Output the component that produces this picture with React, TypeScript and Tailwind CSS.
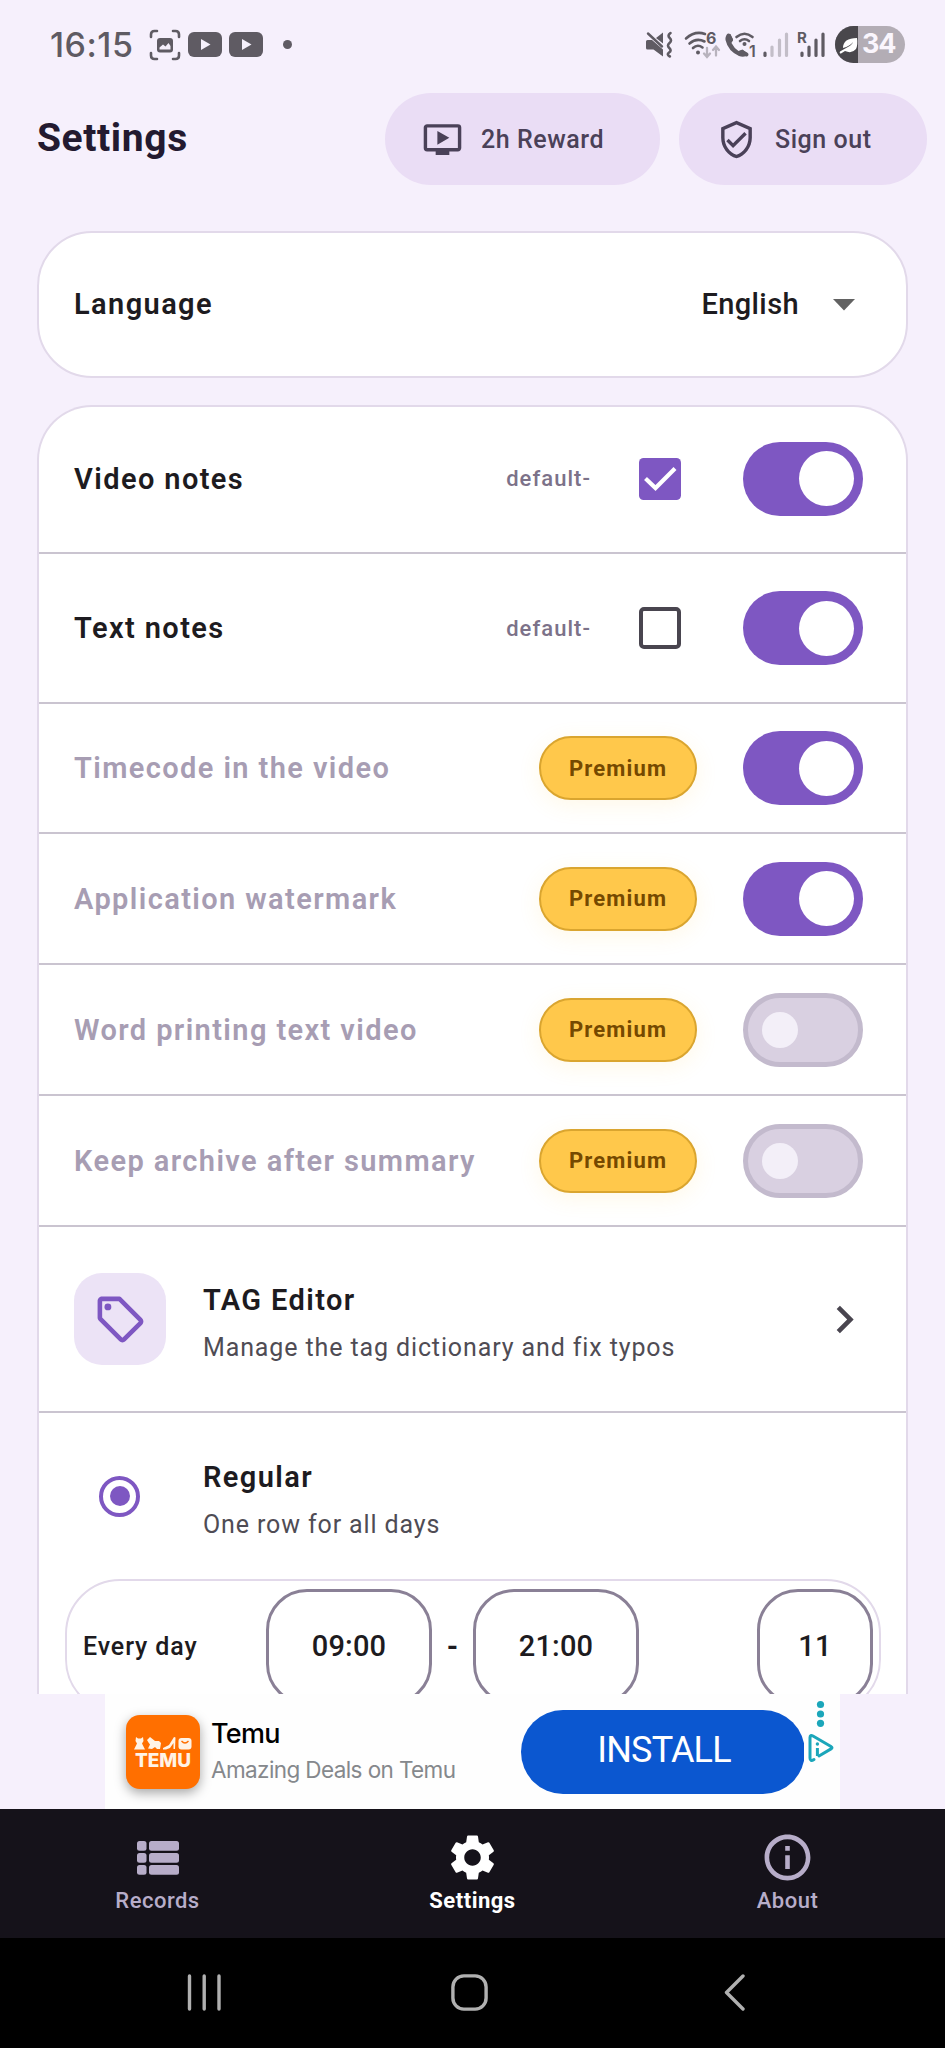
import { ReactNode, useState } from 'react'
import { MdChevronRight, MdOndemandVideo, MdOutlineInfo, MdOutlineSell, MdOutlineVerifiedUser, MdSettings } from 'react-icons/md'

type PremiumItem = {
  name: string;
  enabled: boolean;
  height: string;
}

const premiumItems: PremiumItem[] = [
  { name: 'Timecode in the video', enabled: true, height: 'h-[130px]' },
  { name: 'Application watermark', enabled: true, height: 'h-[131px]' },
  { name: 'Word printing text video', enabled: false, height: 'h-[131px]' },
  { name: 'Keep archive after summary', enabled: false, height: 'h-[131px]' },
]

export default function App() {
  return (
    <div className="w-[945px] h-[2048px] flex flex-col overflow-hidden bg-[#f6f0fc] font-['Roboto',sans-serif]">
      <StatusBar />
      <Header />

      <main className="h-[1463px] shrink-0 overflow-hidden px-[37px]">
        <section className="h-[147px] w-[871px] flex items-center justify-between rounded-[55px] border-2 border-[#e2d9ea] bg-white pl-[35px] pr-[51px]">
          <span className="text-[29px] font-semibold tracking-[1.4px] text-[#1d1b20]">Language</span>
          <div className="flex items-center gap-[34px]">
            <span className="text-[29px] font-medium tracking-[0.4px] text-[#1d1b20]">English</span>
            <svg width="22" height="12" viewBox="0 0 22 12"><path d="M0 0h22L11 11.5z" fill="#626262" /></svg>
          </div>
        </section>

        <section className="mt-[27px] w-[871px] rounded-t-[55px] border-2 border-b-0 border-[#e2d9ea] bg-white">
          <NoteRow name="Video notes" height="h-[147px] pb-[2px]" defaultChecked />
          <NoteRow name="Text notes" height="h-[150px]" />
          {premiumItems.map((item) => <PremiumRow key={item.name} item={item} />)}

          {/* Tag editor */}
          <div className="h-[186px] flex items-center border-b-2 border-[#cac4d0] pl-[35px] pr-[34px]">
            <div className="w-[92px] h-[92px] flex items-center justify-center rounded-[28px] bg-[#ece3f6]">
              <MdOutlineSell size={55} className="text-[#7e57c2]" />
            </div>
            <TitleBlock title="TAG Editor" subtitle="Manage the tag dictionary and fix typos" />
            <MdChevronRight size={55} className="ml-auto text-[#49454f]" />
          </div>

          {/* Schedule */}
          <div className="h-[166px] flex items-center pl-[60px]">
            <div className="w-[41px] h-[41px] flex items-center justify-center rounded-full border-[4px] border-[#7e57c2]">
              <div className="w-5 h-5 rounded-full bg-[#7e57c2]" />
            </div>
            <div className="w-[26px]" />
            <TitleBlock title="Regular" subtitle="One row for all days" />
          </div>
          <div className="ml-[26px] w-[816px] h-[135px] flex items-center rounded-[55px] border-2 border-[#e2d9ea] pl-[16px]">
            <span className="w-[183px] text-[25px] font-medium tracking-[0.9px] text-[#1d1b20]">Every day</span>
            <TimeBox className="w-[166px]">09:00</TimeBox>
            <span className="w-[41px] text-center text-[29px] font-bold text-[#1d1b20]">-</span>
            <TimeBox className="w-[166px]">21:00</TimeBox>
            <TimeBox className="ml-auto mr-[6px] w-[116px]">11</TimeBox>
          </div>
        </section>
      </main>

      <AdBanner />

      {/* Bottom tabs */}
      <nav className="h-[129px] shrink-0 flex bg-[#15121a] text-[#b7adc9]">
        <Tab label="Records">
          <svg width="42" height="34" viewBox="0 0 42 34" fill="currentColor">
            {[0, 12, 24].map((y) => (
              <g key={y}>
                <rect x="0" y={y} width="9.5" height="9.8" rx="2.5" />
                <rect x="12" y={y} width="30" height="9.8" rx="2.5" />
              </g>
            ))}
          </svg>
        </Tab>
        <Tab label="Settings" active>
          <MdSettings size={55} />
        </Tab>
        <Tab label="About">
          <MdOutlineInfo size={55} />
        </Tab>
      </nav>

      {/* System navigation */}
      <div className="h-[110px] shrink-0 flex items-center justify-between bg-black pl-[187px] pr-[200px] pb-px">
        <svg width="35" height="37" viewBox="0 0 35 37" stroke="#b0b0b0" strokeWidth="3.4" strokeLinecap="round">
          <path d="M2.5 2v33M17.2 2v33M32 2v33" />
        </svg>
        <svg className="mr-2" width="37" height="37" viewBox="0 0 37 37" fill="none" stroke="#b0b0b0" strokeWidth="3.4">
          <rect x="1.9" y="1.9" width="33.2" height="33.2" rx="11" />
        </svg>
        <svg width="21" height="37" viewBox="0 0 21 37" fill="none" stroke="#b0b0b0" strokeWidth="3.4" strokeLinecap="round" strokeLinejoin="round">
          <path d="M19 2L2.5 18.5L19 35" />
        </svg>
      </div>
    </div>
  )
}

function StatusBar() {
  return (
    <div className="h-[93px] shrink-0 flex items-start px-[50px] pt-[26px] text-[#5f5b63]">
      <div className="h-[37px] flex items-center">
        <span className="w-[99px] font-['Inter',sans-serif] text-[34px] font-medium tracking-[0.5px]">16:15</span>
        <svg width="32" height="32" viewBox="0 0 32 32" fill="none" stroke="currentColor" strokeWidth="2.6" strokeLinecap="round">
          <path d="M2 8V5.500Q2 2 5.500 2H8M24 2h2.500Q30 2 30 5.500V8M30 24v2.500Q30 30 26.500 30H24M8 30H5.500Q2 30 2 26.500V24" />
          <rect x="8" y="9" width="16" height="14.500" rx="3" fill="currentColor" stroke="none" />
          <path d="M10.500 20.500v-2l3.500-3 2.500 2 3-3.500 2 3v3.500z" fill="#f6f0fc" stroke="none" />
        </svg>
        <YoutubeBadge className="ml-[7px]" />
        <YoutubeBadge className="ml-[7px]" />
        <div className="ml-5 w-[9px] h-[9px] rounded-full bg-[#5f5b63]" />
      </div>

      <div className="ml-auto h-[37px] flex items-center -mr-[10px]">
        {/* Vibrate / muted */}
        <svg width="28" height="28" viewBox="0 0 28 28" fill="none" stroke="currentColor" strokeLinecap="round">
          <path d="M1 10.500Q1 9 2.500 9H7L18 18.500V25.500L8.500 18.500H2.500Q1 18.500 1 17zM18 1.500V12.500L11 7z" fill="currentColor" stroke="none" />
          <path d="M3 2.500L17 15.500" strokeWidth="2.4" />
          <path d="M25.500 2q-3.500 2.500-.8 5t-.2 5t-.2 5t-.2 4.500t.8 4" strokeWidth="2.600" />
        </svg>
        {/* Wifi 6 */}
        <svg className="ml-[11px]" width="37" height="40" viewBox="0 -6 37 40" fill="none" stroke="currentColor" strokeWidth="2.600" strokeLinecap="round">
          <path d="M2 7.500Q11 -.5 21 3M5.500 12.500Q12.500 6.500 20.500 10.500M9 17Q13.500 12.800 18.500 16.500" />
          <circle cx="14" cy="21.500" r="2" fill="currentColor" stroke="none" />
          <text x="22" y="13" fontSize="16" fontWeight="700" fontFamily="Inter" fill="currentColor" stroke="none">6</text>
          <path d="M23 17v8.500M20 22.500l3 3.500 3-3.500M32 24.500V16M29 19l3-3.500 3 3.500" stroke="#b8b3bd" strokeWidth="2.300" />
        </svg>
        {/* Wifi calling */}
        <svg className="ml-[3px]" width="37" height="40" viewBox="0 -6 37 40" fill="none" stroke="currentColor" strokeWidth="2.600" strokeLinecap="round">
          <path d="M3.500 3.500Q1 5 1.500 9Q4 20 15 25Q19 26.500 22 25L23.500 22.500 18.500 18.500 14.500 20Q10 17 7.500 12L9 8.500 6.500 3Z" fill="currentColor" stroke="none" />
          <path d="M4.500 4.500L7 9M18 21L22.500 23.500" strokeWidth="4" />
          <path d="M12.500 6Q20.500 -.5 28.500 6M16 10Q20.500 6.500 25 10" />
          <circle cx="20.500" cy="13" r="2" fill="currentColor" stroke="none" />
          <text x="25" y="26" fontSize="16" fontWeight="600" fontFamily="Inter" fill="currentColor" stroke="none">1</text>
        </svg>
        {/* Signal bars */}
        <svg className="ml-[2px]" width="26" height="28" viewBox="0 0 26 28" stroke="#c3bec8" strokeWidth="3.200" strokeLinecap="round">
          <path d="M2 22v2.500" stroke="#5f5b63" />
          <path d="M9 16v8.500M16.500 9v15.500M23.500 3v21.500" />
        </svg>
        <svg className="ml-[6px]" width="31" height="40" viewBox="-2 -6 31 40" stroke="currentColor" strokeWidth="3.200" strokeLinecap="round">
          <path d="M5 22v2.500M12 16v8.500M19 9v15.500M26 3v21.500" />
          <text x="0" y="12" fontSize="15" fontWeight="700" fontFamily="Inter" fill="currentColor" stroke="none">R</text>
        </svg>
        {/* Battery */}
        <div className="ml-[9px] w-[70px] h-[37px] flex items-center overflow-hidden rounded-full bg-[#b3adb5]">
          <div className="w-[23px] h-full flex items-center bg-[#49474c]">
            <svg width="23" height="20" viewBox="0 0 23 20">
              <path d="M8 13Q8 3 22 3Q23 10 21 14Q17 19 10 16L6 18.500Q4 18.500 5 16.500L12 12.500Q17 10 18 7Q15 11 8 13z" fill="white" />
            </svg>
          </div>
          <span className="ml-[4px] font-['Inter',sans-serif] text-[27px] font-bold tracking-[-1.2px] text-[#faf6fd]">34</span>
        </div>
      </div>
    </div>
  )
}

function YoutubeBadge({ className }: { className: string }) {
  return (
    <svg className={className} width="34" height="25" viewBox="0 0 34 25">
      <rect width="34" height="25" rx="6" fill="#5f5b63" />
      <path d="M13 7v11l9.500-5.500z" fill="#f6f0fc" />
    </svg>
  )
}

function Header() {
  return (
    <header className="h-[138px] shrink-0 flex items-start pl-[37px] pr-[18px]">
      <h1 className="h-[90px] flex items-center text-[39px] font-bold tracking-[0.6px] text-[#231a30]">Settings</h1>
      <button className="ml-auto w-[275px] h-[92px] flex items-center rounded-full bg-[#eaddf5] pl-[37px] text-[#4a4158]">
        <MdOndemandVideo size={41} />
        <span className="ml-[18px] pt-[2px] text-[25px] font-medium tracking-[0.55px]">2h Reward</span>
      </button>
      <button className="ml-[19px] w-[248px] h-[92px] flex items-center rounded-full bg-[#eaddf5] pl-[37px] text-[#4a4158]">
        <MdOutlineVerifiedUser size={41} />
        <span className="ml-[18px] pt-[2px] text-[25px] font-medium tracking-[0.55px]">Sign out</span>
      </button>
    </header>
  )
}

function Toggle({ initial, disabled = false }: { initial: boolean; disabled?: boolean }) {
  const [on, setOn] = useState(initial)
  return (
    <button
      disabled={disabled}
      onClick={() => setOn(!on)}
      className={`w-[120px] h-[74px] shrink-0 flex items-center rounded-full ${
        on ? 'justify-end bg-[#7e57c2] pr-[9px]' : 'border-[5px] border-[#c3bacd] bg-[#d9d0e1] pl-[14px]'
      }`}
    >
      <span className={`rounded-full ${on ? 'w-[55px] h-[55px] bg-white' : 'w-[36px] h-[36px] bg-[#f3eff8]'}`} />
    </button>
  )
}

function NoteRow({ name, height, defaultChecked = false }: { name: string; height: string; defaultChecked?: boolean }) {
  const [checked, setChecked] = useState(defaultChecked)
  return (
    <div className={`${height} flex items-center border-b-2 border-[#cac4d0] pl-[35px] pr-[43px]`}>
      <span className="pt-[2px] text-[29px] font-semibold tracking-[1.4px] text-[#1d1b20]">{name}</span>
      <span className="ml-auto text-[22px] font-medium tracking-[1.05px] text-[#7c7289]">default-</span>
      <button onClick={() => setChecked(!checked)} className="ml-[48px] mr-[62px] w-[42px] h-[42px]">
        {checked ? (
          <svg width="42" height="42" viewBox="0 0 42 42" fill="none">
            <rect width="42" height="42" rx="4.600" fill="#7e57c2" />
            <path d="M6.500 20.500L16.500 30L36 10.500" stroke="white" strokeWidth="4.200" />
          </svg>
        ) : (
          <span className="block w-full h-full rounded-[5px] border-[4.6px] border-[#49454f]" />
        )}
      </button>
      <Toggle initial />
    </div>
  )
}

function PremiumRow({ item }: { item: PremiumItem }) {
  return (
    <div className={`${item.height} flex items-center border-b-2 border-[#cac4d0] pl-[35px] pr-[43px]`}>
      <span className="pt-[2px] text-[29px] font-semibold tracking-[1.4px] text-[#a79db3]">{item.name}</span>
      <span className="ml-auto mr-[46px] w-[158px] h-[64px] flex items-center justify-center rounded-full border-2 border-[#daa52f] bg-[#ffc84b] text-[22px] font-bold tracking-[1.15px] text-[#754900] shadow-[0_5px_22px_rgba(255,200,60,0.12)]">
        Premium
      </span>
      <Toggle initial={item.enabled} disabled />
    </div>
  )
}

function TitleBlock({ title, subtitle }: { title: string; subtitle: string }) {
  return (
    <div className="ml-[37px] flex flex-col pt-[11px]">
      <span className="text-[29px] leading-[46px] font-semibold tracking-[1.4px] text-[#1d1b20]">{title}</span>
      <span className="text-[25px] leading-[49px] tracking-[0.88px] text-[#4f4c54]">{subtitle}</span>
    </div>
  )
}

function TimeBox({ className, children }: { className: string; children: ReactNode }) {
  return (
    <div className={`${className} h-[116px] flex items-center justify-center rounded-[41px] border-[3px] border-[#8a8096] text-[29px] font-medium tracking-[0.2px] text-[#1d1b20]`}>
      {children}
    </div>
  )
}

function AdBanner() {
  return (
    <div className="h-[115px] shrink-0 flex justify-center">
      <div className="relative w-[735px] h-full flex items-center bg-[#fefefe] pl-[21px]">
        <div className="w-[74px] h-[74px] flex flex-col items-center rounded-[14px] bg-[#ff6f00] pt-[22px] text-white shadow-[0_4px_12px_rgba(0,0,0,0.35)]">
          <svg width="58" height="13" viewBox="0 0 58 13" fill="#fff3e6">
            <path d="M2 0l2 1.500h3L9 0l.5 4-1.500 2.500L11 12.500H0L3 6.500 1.500 4z" />
            <path d="M13 3l3-3 5 4h4l2 2-1 6h-3l-2-2-3 2-4-.5 2-4-1.500-2z" />
            <path d="M29 11l6-3 5-8 1.500.5L41 12h-1.500V6L36 11l-4 1.500h-3z" />
            <rect x="44.500" y="1" width="13" height="11.500" rx="3" />
            <path d="M47.500 4q3.500 4 7 0" stroke="#ff6f00" strokeWidth="1.300" fill="none" />
          </svg>
          <span className="mt-[3px] font-['Inter',sans-serif] text-[19px] leading-[15px] font-extrabold text-[#fff3e6]">TEMU</span>
        </div>
        <div className="ml-[11px] flex flex-col pt-[3px]">
          <span className="font-['Inter',sans-serif] text-[27px] leading-[34px] font-medium tracking-[-0.7px] text-black">Temu</span>
          <span className="font-['Inter',sans-serif] text-[22.5px] leading-[38px] tracking-[-0.6px] text-[#85888c]">Amazing Deals on Temu</span>
        </div>
        <button className="ml-auto mr-[35px] w-[284px] h-[84px] flex items-center justify-center rounded-full bg-[#0b57d0] pb-[3px] pl-[2px] text-[36px] tracking-[-0.8px] text-white">
          INSTALL
        </button>
        {/* Ad choices, over the button edge */}
        <div className="absolute right-0 top-0 w-[36px] h-[71px] bg-[#fefefe]">
          <svg width="36" height="71" viewBox="0 0 36 71" fill="none" stroke="#1ba6ba">
            <g fill="#1ba6ba" stroke="none">
              <circle cx="16.500" cy="10.500" r="3.600" />
              <circle cx="16.500" cy="20" r="3.600" />
              <circle cx="16.500" cy="29.300" r="3.600" />
            </g>
            <path d="M10 65.500q-4 2.500-4-1.500V43.500q0-3 3-1.500L27 52.500q2 1.200 0 2.400L15 62" strokeWidth="3" strokeLinecap="round" />
            <path d="M13.400 54v8" strokeWidth="3" />
            <circle cx="13.400" cy="50" r="1.700" fill="#1ba6ba" stroke="none" />
          </svg>
        </div>
      </div>
    </div>
  )
}

function Tab({ label, active = false, children }: { label: string; active?: boolean; children: ReactNode }) {
  return (
    <div className={`flex-1 flex flex-col items-center pt-[21px] ${active ? 'text-white' : ''}`}>
      <div className="h-[55px] flex items-center justify-center">{children}</div>
      <span className={`mt-[1px] text-[22px] leading-[29px] tracking-[0.5px] ${active ? 'font-bold' : 'font-medium'}`}>{label}</span>
    </div>
  )
}
